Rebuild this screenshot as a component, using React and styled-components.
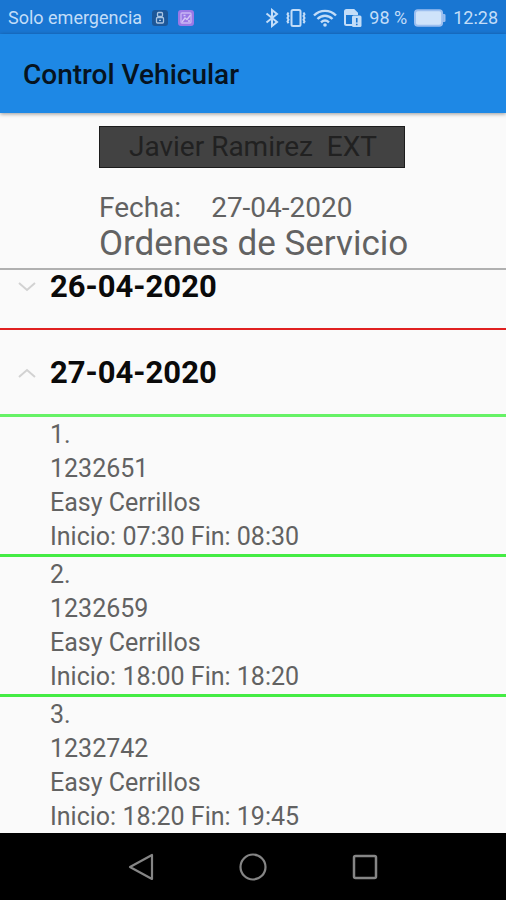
import React, { useLayoutEffect, useRef, useState } from 'react';
import styled, { createGlobalStyle } from 'styled-components';

const GlobalStyle = createGlobalStyle`
  * {
    box-sizing: border-box;
  }
  body {
    margin: 0;
    background: #fafafa;
    font-family: Roboto, "Liberation Sans", sans-serif;
  }
`;

const Screen = styled.div`
  display: flex;
  flex-direction: column;
  height: 100vh;
  background: #fafafa;
  color: #626262;
`;

const StatusBar = styled.div`
  display: flex;
  align-items: center;
  justify-content: space-between;
  flex: none;
  height: 34px;
  padding: 2px 8px 0;
  background: #1976d2;
  color: #c3ddf8;
  font-size: 18px;
  line-height: 24px;
  white-space: nowrap;
`;

const StatusGroup = styled.div`
  display: flex;
  align-items: center;
  gap: ${({ $gap }) => $gap}px;

  svg {
    display: block;
    flex: none;
  }
`;

const AppBar = styled.header`
  display: flex;
  align-items: center;
  flex: none;
  height: 79px;
  padding: 2px 23px 0;
  background: #1e88e5;
  box-shadow: 0 1px 4px rgba(0, 0, 0, 0.4);
  z-index: 1;
`;

const AppTitle = styled.h1`
  margin: 0;
  color: #061320;
  font-size: 28px;
  font-weight: 500;
  line-height: 32px;
`;

const Summary = styled.section`
  flex: none;
  padding: 13px 98px 5px 99px;
  border-bottom: 2px solid #b0b0b0;
  white-space: nowrap;
`;

const UserName = styled.div`
  max-width: 306px;
  padding: 4px 0 4px 29px;
  border: 1px solid #1c1c1c;
  background: #424242;
  color: #212121;
  font-size: 28px;
  line-height: 32px;
  white-space: pre;
`;

const DateLine = styled.div`
  display: flex;
  gap: 30px;
  margin-top: 23px;
  font-size: 28px;
  line-height: 34px;
`;

const SectionTitle = styled.h2`
  margin: 0;
  font-size: 35px;
  font-weight: 400;
  line-height: 38px;
`;

/* Only this part scrolls */
const OrderList = styled.main`
  flex: 1;
  min-height: 0;
  overflow-y: auto;
  scrollbar-width: none;
`;

const DayButton = styled.button`
  display: flex;
  align-items: center;
  gap: 14px;
  width: 100%;
  height: 87px;
  padding: 2px 18px 0;
  border: 0;
  border-bottom: ${({ $open }) => ($open ? '3px solid #66f266' : '2px solid #e02020')};
  background: none;
  color: #0a0a0a;
  font-family: inherit;
  font-size: 31px;
  font-weight: 700;
  line-height: 30px;
  text-align: left;
`;

const Orders = styled.ol`
  margin: 0;
  padding: 0;
  list-style: none;
`;

const Order = styled.li`
  padding: 1px 16px 0 50px;
  border-bottom: 3px solid #44ec44;
  font-size: 25px;
  line-height: 34px;
`;

const NavBar = styled.nav`
  display: flex;
  justify-content: center;
  gap: 64px;
  flex: none;
  height: 67px;
  background: #000;
`;

const NavButton = styled.button`
  display: flex;
  align-items: center;
  justify-content: center;
  width: 48px;
  padding: 0;
  border: 0;
  background: none;
  color: #858585;
`;

const AppBadge = ({ color, children }) => (
  <svg width="16" height="16" viewBox="0 0 16 16" fill="none">
    <rect width="16" height="16" rx="3" fill={color} />
    {children}
  </svg>
);

const BluetoothIcon = () => (
  <svg width="14" height="20" viewBox="0 0 14 20" fill="none" stroke="currentColor" strokeWidth="2">
    <path d="M1.5 5.5 12 14 7 18V2l5 4L1.5 14.5" />
  </svg>
);

const VibrateIcon = () => (
  <svg width="20" height="18" viewBox="0 0 20 18" fill="none" stroke="currentColor">
    <rect x="5.5" y="1" width="9" height="16" rx="1.5" strokeWidth="2" />
    <path d="M2.500 3.500l-1 1.800 1 1.800-1 1.800 1 1.800-1 1.800 1 1.800M17.500 3.500l1 1.800-1 1.800 1 1.800-1 1.800 1 1.800-1 1.800" strokeWidth="2" />
  </svg>
);

const WifiIcon = () => (
  <svg width="24" height="18" viewBox="0 0 24 18" fill="none" stroke="currentColor" strokeWidth="2.4">
    <path d="M1 6.5C7 .3 17 .3 23 6.5M4.5 10c4.5-4.3 10.5-4.3 15 0M8 13.3c2.5-2.3 5.5-2.3 8 0" />
    <circle cx="12" cy="16" r="1.8" fill="currentColor" stroke="none" />
  </svg>
);

const SimIcon = () => (
  <svg width="18" height="18" viewBox="0 0 18 18" fill="none">
    <path d="M8 16H2.5A1.5 1.5 0 0 1 1 14.5v-12A1.5 1.5 0 0 1 2.5 1h7.3L13 4.2V6" stroke="currentColor" strokeWidth="2" />
    <path d="M2 2h8l3 3v1H2z" fill="currentColor" />
    <rect x="8" y="6.5" width="9.5" height="11.5" rx="1.5" fill="currentColor" />
    <path d="M12.75 9v4.5M12.75 14.7v1.6" stroke="#1976d2" strokeWidth="1.6" />
  </svg>
);

const BatteryIcon = () => (
  <svg width="32" height="18" viewBox="0 0 33 18">
    <rect x="1" y="1" width="28" height="16" rx="3" fill="#cfe3fa" stroke="#9cbff0" strokeWidth="2" />
    <path d="M30 5h1q1.5 0 1.5 1v6q0 1-1.5 1H30z" fill="#9cbff0" />
  </svg>
);

const Chevron = ({ up }) => (
  <svg width="18" height="10" viewBox="0 0 18 10" fill="none" stroke="#d2d2d2" strokeWidth="2">
    <path d={up ? 'M1 9l8-7 8 7' : 'M1 1l8 7 8-7'} />
  </svg>
);

const DAYS = [
  { date: '26-04-2020', orders: [] },
  {
    date: '27-04-2020',
    orders: [
      { id: '1232651', place: 'Easy Cerrillos', start: '07:30', end: '08:30' },
      { id: '1232659', place: 'Easy Cerrillos', start: '18:00', end: '18:20' },
      { id: '1232742', place: 'Easy Cerrillos', start: '18:20', end: '19:45' },
    ],
  },
];

const App = () => {
  const [openDay, setOpenDay] = useState('27-04-2020');
  const listRef = useRef(null);

  useLayoutEffect(() => {
    listRef.current.scrollTop = 27;
  }, []);

  return (
    <Screen>
      <GlobalStyle />
      <StatusBar>
        <StatusGroup $gap={10}>
          <span>Solo emergencia</span>
          <AppBadge color="#1c5799">
            <rect x="5.5" y="2.5" width="5" height="4" rx="1" stroke="#a9c4e2" strokeWidth="1.3" />
            <rect x="4.5" y="7.5" width="7" height="5.5" rx="1" stroke="#a9c4e2" strokeWidth="1.3" />
            <path d="M7 10.3h2" stroke="#a9c4e2" strokeWidth="1.3" />
          </AppBadge>
          <AppBadge color="#9a78e6">
            <rect x="3" y="3" width="10" height="10" rx="1" stroke="#c9b6f5" strokeWidth="1.3" />
            <path d="M4 12l3-4 2 1.5L12.5 5M5.5 5.5h2M10 11h2" stroke="#d5c6f7" strokeWidth="1.3" />
          </AppBadge>
        </StatusGroup>
        <StatusGroup $gap={7}>
          <BluetoothIcon />
          <VibrateIcon />
          <WifiIcon />
          <SimIcon />
          <span>98 %</span>
          <BatteryIcon />
          <span>12:28</span>
        </StatusGroup>
      </StatusBar>

      <AppBar>
        <AppTitle>Control Vehicular</AppTitle>
      </AppBar>

      <Summary>
        <UserName>{'Javier Ramirez  EXT'}</UserName>
        <DateLine>
          <span>Fecha:</span>
          <span>27-04-2020</span>
        </DateLine>
        <SectionTitle>Ordenes de Servicio</SectionTitle>
      </Summary>

      <OrderList ref={listRef}>
        {DAYS.map(({ date, orders }) => {
          const open = openDay === date;
          return (
            <section key={date}>
              <DayButton
                type="button"
                $open={open}
                aria-expanded={open}
                onClick={() => setOpenDay(open ? null : date)}
              >
                <Chevron up={open} />
                {date}
              </DayButton>
              {open && (
                <Orders>
                  {orders.map((order, index) => (
                    <Order key={order.id}>
                      <div>{index + 1}.</div>
                      <div>{order.id}</div>
                      <div>{order.place}</div>
                      <div>
                        Inicio: {order.start} Fin: {order.end}
                      </div>
                    </Order>
                  ))}
                </Orders>
              )}
            </section>
          );
        })}
      </OrderList>

      <NavBar>
        <NavButton type="button" aria-label="Atrás">
          <svg width="26" height="28" viewBox="0 0 26 28" fill="none" stroke="currentColor" strokeWidth="2.2" strokeLinejoin="round">
            <path d="M24 2v24L2 14z" />
          </svg>
        </NavButton>
        <NavButton type="button" aria-label="Inicio">
          <svg width="28" height="28" viewBox="0 0 28 28" fill="none" stroke="currentColor" strokeWidth="2.2">
            <circle cx="14" cy="14" r="12.5" />
          </svg>
        </NavButton>
        <NavButton type="button" aria-label="Recientes">
          <svg width="26" height="26" viewBox="0 0 26 26" fill="none" stroke="currentColor" strokeWidth="2.5">
            <rect x="2" y="2" width="22" height="22" rx="1.5" />
          </svg>
        </NavButton>
      </NavBar>
    </Screen>
  );
};

export default App;
